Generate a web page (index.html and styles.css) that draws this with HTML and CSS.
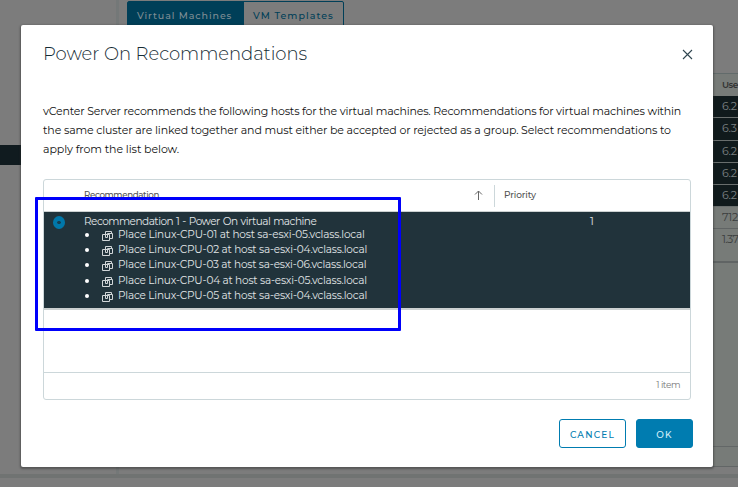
FILE: index.html
```
<!DOCTYPE html>
<html lang="en">
<head>
<meta charset="utf-8">
<title>Power On Recommendations</title>
<link rel="stylesheet" href="styles.css">
</head>
<body>
<svg class="defs" aria-hidden="true">
  <symbol id="vms" viewBox="0 0 11 10">
    <path d="M.5 3.500h7v6h-7zM3.500 6.500v-6h6v2M5.500 2.500h5v5h-3M3.500 6.500h2v-4" fill="none" stroke="currentColor"/>
  </symbol>
</svg>
<div class="app">
  <aside class="nav"><div class="nav-selected"></div></aside>
  <main class="content">
    <div class="tabs"><span class="tab active"><span class="t-tab1">Virtual Machines</span></span><span class="tab"><span class="t-tab2">VM Templates</span></span></div>
    <div class="vm-table">
      <div class="vm-head">Use</div>
      <div class="vm-row on">6.2</div>
      <div class="vm-row on">6.3</div>
      <div class="vm-row on">6.2</div>
      <div class="vm-row on">6.2</div>
      <div class="vm-row on">6.2</div>
      <div class="vm-row">712</div>
      <div class="vm-row last">1.37</div>
      <div class="vm-foot"></div>
    </div>
  </main>
</div>
<div class="bottom-bar"></div>

<section class="modal">
  <header class="modal-head">
    <h1>Power On Recommendations</h1>
    <svg class="close" viewBox="0 0 11 11"><path d="M1 1l9 9M10 1l-9 9" fill="none" stroke="#304650" stroke-width="1.1"/></svg>
  </header>
  <p class="intro"><span class="t-p1">vCenter Server recommends the following hosts for the virtual machines. Recommendations for virtual machines within</span><br><span class="t-p2">the same cluster are linked together and must either be accepted or rejected as a group. Select recommendations to</span><br><span class="t-p3">apply from the list below.</span></p>
  <div class="grid">
    <div class="grid-head">
      <div class="col-rec"><span class="t-head">Recommendation</span>
        <svg class="sort" viewBox="0 0 9 10"><path d="M4.500 10V1M1 4.500l3.500-3.500 3.500 3.500" fill="none" stroke="#666"/></svg>
      </div>
      <div class="col-pri"><span class="t-pri">Priority</span></div>
    </div>
    <div class="grid-row">
      <span class="radio"></span>
      <div class="rec">
        <div class="rec-title">Recommendation 1 - Power On virtual machine</div>
        <ul>
          <li><svg><use href="#vms"/></svg><span>Place Linux-CPU-01 at host sa-esxi-05.vclass.local</span></li>
          <li><svg><use href="#vms"/></svg><span>Place Linux-CPU-02 at host sa-esxi-04.vclass.local</span></li>
          <li><svg><use href="#vms"/></svg><span>Place Linux-CPU-03 at host sa-esxi-06.vclass.local</span></li>
          <li><svg><use href="#vms"/></svg><span>Place Linux-CPU-04 at host sa-esxi-05.vclass.local</span></li>
          <li><svg><use href="#vms"/></svg><span>Place Linux-CPU-05 at host sa-esxi-04.vclass.local</span></li>
        </ul>
      </div>
      <span class="priority">1</span>
    </div>
    <div class="grid-space"></div>
    <div class="grid-foot"><span class="t-item">1 item</span></div>
  </div>
  <footer class="actions">
    <button class="btn cancel"><span>CANCEL</span></button>
    <button class="btn ok"><span>OK</span></button>
  </footer>
</section>
<div class="highlight"></div>
</body>
</html>
```
FILE: styles.css
```
* { box-sizing: border-box; }
body {
  margin: 0;
  width: 738px;
  height: 487px;
  overflow: hidden;
  position: relative;
  background: #7c7c7c;
  font-family: Metropolis, Montserrat, Inter, sans-serif;
  font-size: 11px;
}
.defs { position: absolute; width: 0; height: 0; }
.app { display: flex; height: 474px; }
.nav { width: 119px; border-right: 3px solid #747878; padding-top: 145px; }
.nav-selected { height: 20px; background: #101b1f; }
.content { flex: 1; padding: 1px 0 0 8px; min-width: 0; }
.tabs {
  display: flex;
  width: 217px;
  height: 36px;
  border: 1px solid #003f58;
  border-radius: 2px;
}
.tab {
  width: 99px;
  padding-left: 9px;
  line-height: 27px;
  font-size: 9.5px;
  font-weight: 500;
  color: #003f58;
  white-space: nowrap;
}
.tab.active { width: 116px; background: #003f58; color: #7e8d94; }
.t-tab1 { letter-spacing: .9px; }
.t-tab2 { letter-spacing: 1.050px; }
.vm-table {
  margin: 36px 0 0 560px;
  height: 394px;
  display: flex;
  flex-direction: column;
  border-top: 1px solid #626b6b;
  border-bottom: 1px solid #626666;
  background: #777b78;
}
.vm-head { height: 22px; padding-left: 35px; line-height: 22px; font-size: 9px; letter-spacing: -.5px; font-weight: 600; color: #333; }
.vm-row { height: 22px; padding-left: 35px; line-height: 20px; letter-spacing: -.3px; border-bottom: 1px solid #606464; color: #3a3d3d; }
.vm-row.on { background: #101a1c; color: #7b8081; height: 22.300px; border-color: #696e6d; }
.vm-row.last { height: 34px; border-bottom-width: 2px; letter-spacing: -.7px; }
.vm-foot { margin-top: auto; height: 20px; border-top: 1px solid #636767; }
.bottom-bar { height: 4px; background: #707372; }

.modal {
  position: absolute;
  left: 21px;
  top: 25px;
  width: 692px;
  height: 442px;
  padding: 0 20px 0 22px;
  display: flex;
  flex-direction: column;
  background: #fff;
  border-radius: 2px;
  box-shadow: 0 1px 2px 1px rgba(40, 40, 40, .45);
}
.modal-head { display: flex; justify-content: space-between; align-items: center; height: 58px; }
h1 { margin: 0; font-size: 18px; line-height: 24px; font-weight: 350; color: #152b34; white-space: nowrap; letter-spacing: -.05px; }
.close { width: 11px; height: 11px; display: block; }
.intro { margin: 19px 0 0; height: 57px; line-height: 19px; color: #111; white-space: nowrap; }
.t-p1 { letter-spacing: -.195px; }
.t-p2 { letter-spacing: -.133px; }
.t-p3 { letter-spacing: -.080px; }
.grid {
  margin-top: 20px;
  width: 648px;
  height: 221px;
  display: flex;
  flex-direction: column;
  border: 1px solid #ccd7da;
  border-radius: 3px;
}
.grid-head { display: flex; align-items: center; height: 32px; border-bottom: 1px solid #ccd1d1; font-size: 9px; font-weight: 500; color: #555; }
.t-head, .t-pri { position: relative; top: -1px; }
.t-head { font-size: 8.700px; letter-spacing: -.370px; }
.t-pri { letter-spacing: -.1px; }
.col-rec { width: 451px; height: 22px; padding: 0 11px 0 40px; border-right: 1px solid #ccd7da; display: flex; align-items: center; justify-content: space-between; }
.sort { width: 9px; height: 10px; margin-top: -1px; }
.col-pri { padding-left: 9px; }
.grid-row { display: flex; height: 98px; background: #21333b; border-bottom: 2px solid #ccd1d1; color: #e1e6e8; font-size: 10.500px; }
.radio { margin: 4px 0 0 9px; width: 12px; height: 13px; border-radius: 50%; background: radial-gradient(circle, #143f53 1.500px, #0077a9 2px); }
.rec { margin-left: 19px; width: 460px; white-space: nowrap; }
.rec-title { height: 15px; line-height: 19px; letter-spacing: -.500px; word-spacing: .7px; }
ul { margin: 0; padding: 0; list-style: none; }
li { display: flex; align-items: center; height: 15px; line-height: 15px; letter-spacing: -.19px; }
li:nth-child(4) { margin-top: 1px; }
li:first-child { letter-spacing: -.17px; }
li::before { content: ""; width: 4px; height: 4px; margin: 0 13px 0 1px; border-radius: 50%; background: #fff; }
li svg { width: 11px; height: 10px; margin: 3px 5px 0 0; color: #d1d6d8; }
.priority { margin-left: 46px; line-height: 19px; }
.grid-space { flex: 1; }
.grid-foot { height: 27px; border-top: 1px solid #ccd7da; text-align: right; padding-right: 10px; line-height: 24px; font-size: 9px; letter-spacing: -.45px; color: #777; }
.actions { display: flex; justify-content: flex-end; gap: 10px; margin-top: 19px; }
.btn { height: 29px; padding: 2px 0 0; border: 1px solid #007cb0; border-radius: 3px; font: 500 9px Metropolis, Montserrat, Inter, sans-serif; letter-spacing: 1.200px; }
.cancel { width: 67px; background: #fff; color: #007cb0; }
.ok { width: 57px; background: #007cb0; color: #d6f0fa; }
.highlight { position: absolute; left: 35px; top: 197px; width: 366px; height: 134px; border: 3px solid #0000fb; border-radius: 1px; }
```
